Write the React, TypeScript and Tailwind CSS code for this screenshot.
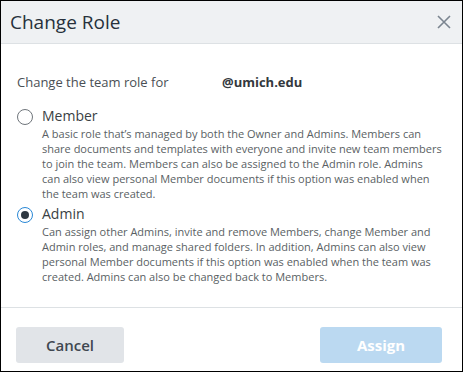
import React, { useState } from 'react';

const roles = [
  {
    id: 'member',
    name: 'Member',
    desc: 'A basic role that’s managed by both the Owner and Admins. Members can share documents and templates with everyone and invite new team members to join the team. Members can also be assigned to the Admin role. Admins can also view personal Member documents if this option was enabled when the team was created.',
  },
  {
    id: 'admin',
    name: 'Admin',
    desc: 'Can assign other Admins, invite and remove Members, change Member and Admin roles, and manage shared folders. In addition, Admins can also view personal Member documents if this option was enabled when the team was created. Admins can also be changed back to Members.',
  },
];

export default function App() {
  const [role, setRole] = useState('admin');

  return (
    <div
      className="w-[463px] h-[372px] border border-black bg-white flex flex-col"
      style={{ fontFamily: '"Open Sans", sans-serif' }}
    >
      <div className="h-[43px] shrink-0 bg-[#eff1f3] border-b border-[#dde1e4] flex items-center justify-between pl-[9px] pr-[11px]">
        <h1 className="text-[19px] text-[#27313c] leading-none">Change Role</h1>
        <svg width="14" height="14" viewBox="0 0 14 14" className="text-[#7b8590]">
          <path d="M1 1L13 13M13 1L1 13" stroke="currentColor" strokeWidth="1.6" />
        </svg>
      </div>

      <div className="flex-1 px-[16px] pt-[28px]">
        <div className="flex text-[13px] text-[#4a4f55] leading-5">
          <span className="w-[205px]">Change the team role for</span>
          <span className="font-bold text-[#33383d]">@umich.edu</span>
        </div>

        <div className="mt-[14px] flex flex-col gap-[3px]">
          {roles.map((r) => {
            const on = role === r.id;
            return (
              <label key={r.id} className="flex gap-[9px] cursor-pointer" onClick={() => setRole(r.id)}>
                <span
                  className={
                    on
                      ? 'mt-[3px] w-[16px] h-[16px] shrink-0 rounded-full border-[1.5px] border-[#2a88d6] flex items-center justify-center'
                      : 'mt-[3px] w-[16px] h-[16px] shrink-0 rounded-full border border-[#6f757b]'
                  }
                >
                  {on && <span className="w-[8px] h-[8px] rounded-full bg-[#2f3840]" />}
                </span>
                <div>
                  <div className="text-[14px] text-[#3a3f44] leading-[20px]">{r.name}</div>
                  <p className="text-[11px] text-[#5a5f64] leading-[15px] pr-[4px]">{r.desc}</p>
                </div>
              </label>
            );
          })}
        </div>
      </div>

      <div className="h-[64px] shrink-0 border-t border-[#dde1e4] flex items-start justify-between pt-[19px] pl-[15px] pr-[20px]">
        <button className="w-[108px] h-[36px] rounded-[3px] bg-[#e1e4e8] text-[15px] font-semibold text-[#3f4750]">
          Cancel
        </button>
        <button className="w-[122px] h-[36px] rounded-[3px] bg-[#bbd9f1] text-[15px] font-bold text-white" disabled>
          Assign
        </button>
      </div>
    </div>
  );
}
